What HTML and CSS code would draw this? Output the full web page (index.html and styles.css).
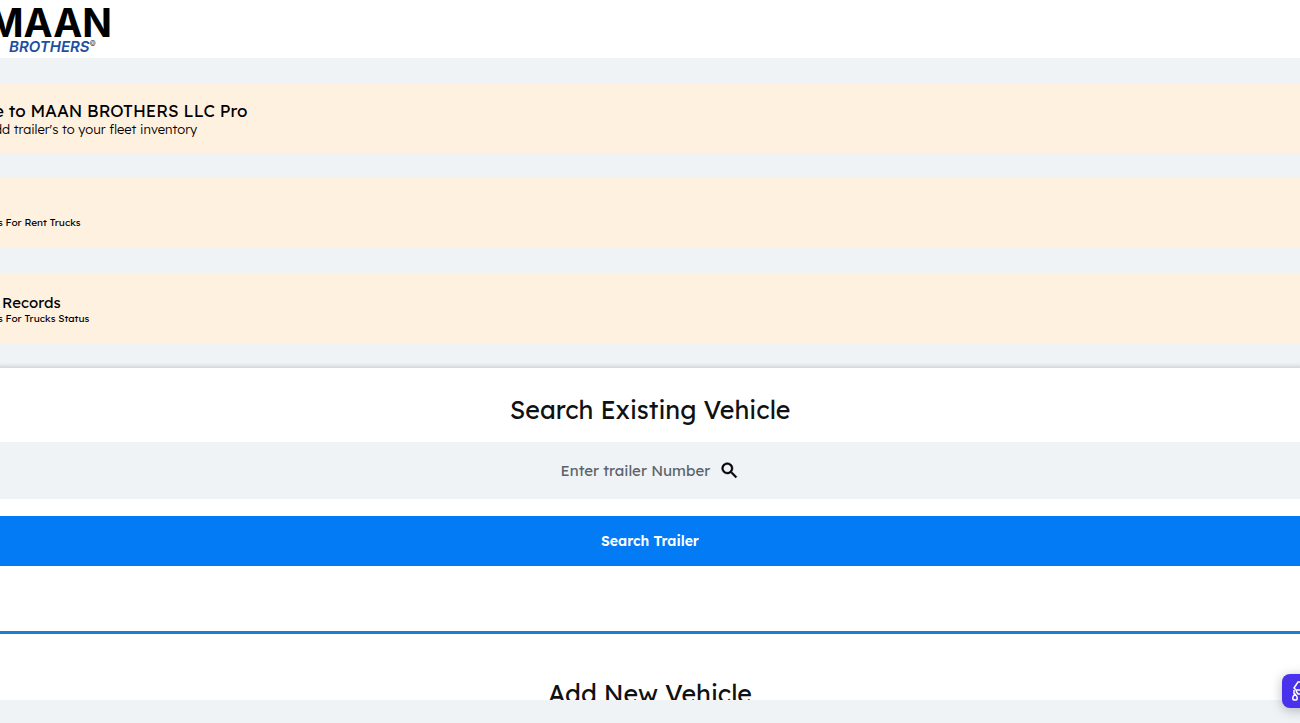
FILE: index.html
```
<!DOCTYPE html>
<html lang="en">
<head>
<meta charset="utf-8">
<title>MAAN BROTHERS</title>
<link rel="stylesheet" href="styles.css">
</head>
<body>
<header class="header">
  <div class="logo">
    <div class="logo-name">MAAN</div>
    <div class="logo-sub">BROTHERS<span class="logo-mark">©</span></div>
  </div>
</header>
<section class="banners">
  <article class="banner">
    <h1 class="banner-title banner-title-large">e to MAAN BROTHERS LLC Pro</h1>
    <p class="banner-text banner-text-large">dd trailer's to your fleet inventory</p>
  </article>
  <article class="banner banner-low">
    <p class="banner-text">s For Rent Trucks</p>
  </article>
  <article class="banner">
    <h2 class="banner-title banner-title-inset">Records</h2>
    <p class="banner-text">s For Trucks Status</p>
  </article>
</section>
<main class="panel">
  <h2 class="heading">Search Existing Vehicle</h2>
  <form class="search">
    <div class="field">
      <input class="field-input" type="text" aria-label="Trailer number" placeholder="Enter trailer Number">
      <svg class="field-icon" viewBox="0 0 24 24" aria-hidden="true"><path d="M15.5 14h-.79l-.28-.27A6.47 6.47 0 0 0 16 9.5 6.5 6.5 0 1 0 9.5 16c1.61 0 3.09-.59 4.23-1.57l.27.28v.79l5 4.99L20.49 19l-4.99-5zm-6 0C7.01 14 5 11.99 5 9.5S7.01 5 9.5 5 14 7.01 14 9.5 11.99 14 9.5 14z"/></svg>
    </div>
    <button class="submit" type="button">Search Trailer</button>
  </form>
  <hr class="rule">
  <h2 class="heading">Add New Vehicle</h2>
</main>
<button class="assist" type="button" aria-label="Open assistant">
  <svg class="assist-icon" viewBox="0 0 34 34" aria-hidden="true"><path d="M22 8h-6l-4 6 2 2h10M12 16v4M14 17l2 3h6M13 20c-3 3-3 6 0 6s3-3 0-6z"/></svg>
</button>
</body>
</html>
```
FILE: styles.css
```
* { box-sizing: border-box; }
body {
  margin: 0;
  height: 100vh;
  display: flex;
  flex-direction: column;
  overflow: hidden;
  padding-bottom: 23px;
  background: #eff3f6;
  color: #111;
  font-family: Lexend, "Open Sans", "Noto Sans", sans-serif;
}
h1, h2, p { margin: 0; font-weight: 400; }
.header {
  flex: none;
  height: 58px;
  padding-top: 5px;
  background: #fff;
}
.logo {
  width: 112px;
  display: flex;
  flex-direction: column;
  align-items: flex-end;
  color: #000;
  font-family: Inter, sans-serif;
  font-weight: 700;
}
.logo-name { font-size: 39px; line-height: 35px; }
.logo-sub {
  padding-right: 16px;
  display: flex;
  color: #1a4fa3;
  font-size: 15px;
  font-weight: 600;
  font-style: italic;
  line-height: 14px;
}
.logo-mark {
  color: #333;
  font-size: 7px;
  font-style: normal;
  font-weight: 400;
  line-height: 7px;
}
.banners {
  flex: none;
  display: flex;
  flex-direction: column;
  gap: 25px;
  padding: 25px 0;
}
.banner {
  height: 70px;
  display: flex;
  flex-direction: column;
  justify-content: center;
  margin-left: -6px;
  padding-top: 3px;
  background: #fff1e0;
  color: #000;
  white-space: nowrap;
}
.banner-low { justify-content: flex-end; padding-bottom: 18px; }
.banner-title { font-size: 15px; line-height: 18px; }
.banner-title-large { font-size: 17px; }
.banner-title-inset { padding-left: 8px; }
.banner-text {
  padding-left: 4px;
  font-size: 10px;
  line-height: 14px;
}
.banner-text-large {
  padding-left: 0;
  font-size: 13px;
  font-weight: 300;
  line-height: 18px;
}
.panel {
  flex: 1;
  min-height: 0;
  overflow: hidden;
  padding-top: 24px;
  background: #fff;
  box-shadow: 0 0 4px 2px #0002;
  clip-path: inset(-6px 0 0 0);
}
.heading {
  font-size: 25px;
  line-height: 36px;
  text-align: center;
}
.search { padding: 14px 0 65px; }
.field {
  height: 57px;
  margin-bottom: 17px;
  display: flex;
  align-items: center;
  justify-content: center;
  gap: 8px;
  background: #eff3f6;
}
.field-input {
  width: 150px;
  padding: 0;
  border: 0;
  outline: 0;
  background: transparent;
  color: #111;
  font: 400 15px Lexend, "Open Sans", "Noto Sans", sans-serif;
}
.field-input::placeholder { color: #5c6369; opacity: 1; }
.field-icon { width: 21px; height: 21px; stroke: #000; stroke-width: 0.5; }
.submit {
  display: block;
  width: 100%;
  height: 50px;
  border: 0;
  background: #027bf5;
  color: #fff;
  font: 600 14px Lexend, "Open Sans", "Noto Sans", sans-serif;
}
.rule {
  height: 3px;
  margin: 0 0 42px;
  border: 0;
  background: #1a7fd6;
}
.assist {
  position: absolute;
  right: -16px;
  bottom: 15px;
  width: 34px;
  height: 34px;
  padding: 0;
  border: 0;
  border-radius: 8px;
  background: #4a32ed;
  box-shadow: 0 2px 12px #0004;
}
.assist-icon {
  display: block;
  width: 34px;
  height: 34px;
  fill: none;
  stroke: #fff;
  stroke-width: 1.5;
}
```
